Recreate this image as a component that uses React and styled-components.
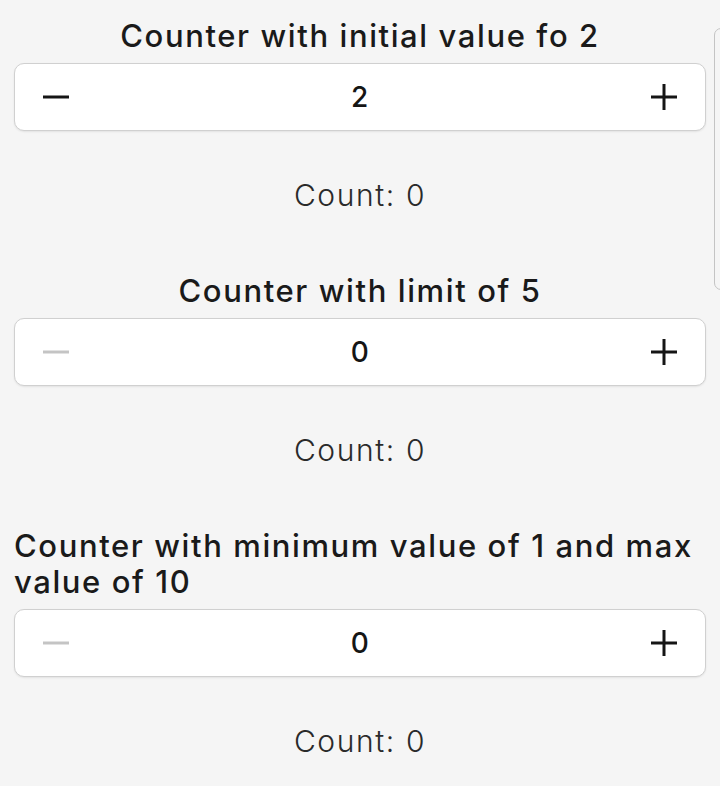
import React, { useState } from "react";
import styled, { createGlobalStyle } from "styled-components";

const Global = createGlobalStyle`
  html, body { margin: 0; padding: 0; background: #f5f5f5; }
  body { font-family: Inter, "Noto Sans", sans-serif; color: #1c1c1c; }
`;

const Page = styled.div`
  position: relative;
  min-height: 786px;
  box-sizing: border-box;
  padding: 18px 14px 0;
  display: flex;
  flex-direction: column;
  gap: 60px;
  overflow: hidden;
`;

const Section = styled.section`
  display: flex;
  flex-direction: column;
  align-items: stretch;
`;

const Title = styled.h2`
  align-self: center;
  margin: 0 0 9px;
  font-size: 31px;
  line-height: 36px;
  font-weight: 500;
  letter-spacing: 1.6px;
  color: #1a1a1a;
`;

const Stepper = styled.div`
  height: 68px;
  box-sizing: border-box;
  background: #fff;
  border: 1px solid #d0d0d0;
  border-radius: 10px;
  box-shadow: 0 1px 2px rgba(0, 0, 0, 0.08);
  display: grid;
  grid-template-columns: 80px 1fr 80px;
  align-items: center;
`;

const StepButton = styled.button`
  border: 0;
  background: transparent;
  padding: 0;
  height: 100%;
  display: flex;
  align-items: center;
  justify-content: ${(p) => (p.$side === "left" ? "flex-start" : "flex-end")};
  padding-left: ${(p) => (p.$side === "left" ? "28px" : "0")};
  padding-right: ${(p) => (p.$side === "right" ? "28px" : "0")};
  color: ${(p) => (p.disabled ? "#c4c4c4" : "#151515")};
  cursor: pointer;
`;

const Value = styled.span`
  text-align: center;
  font-size: 28px;
  font-weight: 500;
  letter-spacing: 0.5px;
  color: #151515;
`;

const Count = styled.p`
  margin: 46px 0 0;
  text-align: center;
  font-size: 30px;
  line-height: 36px;
  font-weight: 300;
  letter-spacing: 1.6px;
  color: #2a2a2a;
`;

const ScrollEdge = styled.div`
  position: absolute;
  left: 714px;
  top: 28px;
  width: 14px;
  height: 262px;
  box-sizing: border-box;
  border: 1.5px solid #c4c4c4;
  border-radius: 8px;
`;

const Minus = () => (
  <svg width="26" height="26" viewBox="0 0 26 26">
    <line x1="0" y1="13" x2="26" y2="13" stroke="currentColor" strokeWidth="3" />
  </svg>
);

const Plus = () => (
  <svg width="26" height="26" viewBox="0 0 26 26">
    <line x1="0" y1="13" x2="26" y2="13" stroke="currentColor" strokeWidth="3" />
    <line x1="13" y1="0" x2="13" y2="26" stroke="currentColor" strokeWidth="3" />
  </svg>
);

function Counter({ title, initial = 0, max }) {
  const [value, setValue] = useState(initial);
  return (
    <Section>
      <Title>{title}</Title>
      <Stepper>
        <StepButton
          $side="left"
          disabled={value <= 0}
          onClick={() => setValue((v) => v - 1)}
          aria-label="decrement"
        >
          <Minus />
        </StepButton>
        <Value>{value}</Value>
        <StepButton
          $side="right"
          onClick={() => setValue((v) => (max !== undefined ? Math.min(max, v + 1) : v + 1))}
          aria-label="increment"
        >
          <Plus />
        </StepButton>
      </Stepper>
      <Count>Count: 0</Count>
    </Section>
  );
}

export default function App() {
  return (
    <>
      <Global />
      <Page>
        <Counter title="Counter with initial value fo 2" initial={2} />
        <Counter title="Counter with limit of 5" initial={0} max={5} />
        <Counter title="Counter with minimum value of 1 and max value of 10" initial={0} max={10} />
        <ScrollEdge />
      </Page>
    </>
  );
}
